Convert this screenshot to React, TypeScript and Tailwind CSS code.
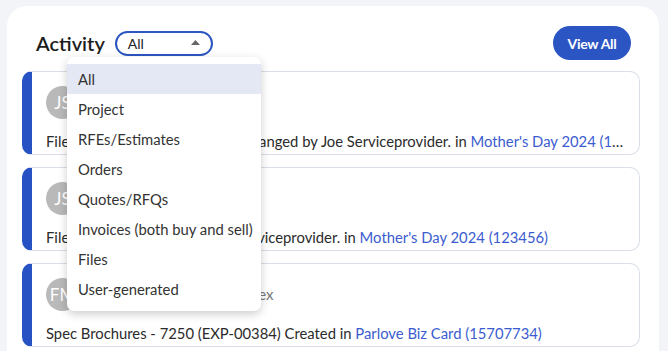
import React from "react";

const options = [
  "All",
  "Project",
  "RFEs/Estimates",
  "Orders",
  "Quotes/RFQs",
  "Invoices (both buy and sell)",
  "Files",
  "User-generated",
];

const items = [
  {
    initials: "JS",
    name: "Joe Serviceprovider",
    text: "File artwork_final-1.pdf status changed by Joe Serviceprovider. in ",
    link: "Mother's Day 2024 (123456)",
  },
  {
    initials: "JS",
    name: "Joe Serviceprovider",
    text: "File proof_1 uploaded by Joe Serviceprovider. in ",
    link: "Mother's Day 2024 (123456)",
  },
  {
    initials: "FM",
    name: "Frank Miller · Parlove Codex",
    text: "Spec Brochures - 7250 (EXP-00384) Created in ",
    link: "Parlove Biz Card (15707734)",
  },
];

const App = () => {
  return (
    <div className="h-[351px] overflow-hidden bg-[#f3f4f8] pt-[6px] pl-[7px] pr-[9px] font-['Lato',sans-serif]">
      <div className="relative h-[400px] rounded-[20px] bg-white pl-[15px] pr-[19px] pt-[20px]">
        {/* header */}
        <div className="flex items-center justify-between pr-[9px]">
          <div className="flex items-center">
            <span className="ml-[14px] text-[20px] font-semibold text-[#1c1c1c]">Activity</span>
            <div className="ml-[10px] flex h-[25px] w-[98px] items-center justify-between rounded-full border-2 border-[#2c55c0] pl-[11px] pr-[11px] text-[14px] text-[#222]">
              <span>All</span>
              <svg width="9" height="5" viewBox="0 0 9 5" className="mt-[-1px]">
                <path d="M0 5 L4.5 0 L9 5 Z" fill="#666" />
              </svg>
            </div>
          </div>
          <button className="h-[34px] w-[78px] rounded-full bg-[#2c55c4] text-[14px] font-bold tracking-[-0.3px] text-white">
            View All
          </button>
        </div>

        {/* cards */}
        <div className="mt-[11px] flex flex-col gap-[12px]">
          {items.map((it, i) => (
            <div
              key={i}
              className="h-[84px] rounded-[10px] border border-l-[10px] border-[#d9dee9] border-l-[#2752c4] pl-[14px] pr-[14px] pt-[14px]"
            >
              <div className="flex items-center gap-[10px]">
                <span className="flex h-[33px] w-[33px] items-center justify-center rounded-full bg-[#b9b9b9] text-[17px] text-white">
                  {it.initials}
                </span>
                <span className="whitespace-nowrap text-[15px] text-[#777]">{it.name}</span>
              </div>
              <div className="mt-[11px] truncate text-[14.8px] text-[#2b2b2b]">
                {it.text}
                <span className="text-[#3b5ccf]">{it.link}</span>
              </div>
            </div>
          ))}
        </div>

        {/* open dropdown */}
        <div className="absolute left-[60px] top-[51px] w-[194px] rounded-[7px] bg-white py-[7px] shadow-[0_3px_10px_rgba(0,0,0,0.2)]">
          {options.map((o, i) => (
            <div
              key={o}
              className={`flex h-[30px] items-center whitespace-nowrap px-[11px] text-[14.8px] text-[#333] ${
                i === 0 ? "bg-[#e3e8f4]" : ""
              }`}
            >
              {o}
            </div>
          ))}
        </div>
      </div>
    </div>
  );
};

export default App;
